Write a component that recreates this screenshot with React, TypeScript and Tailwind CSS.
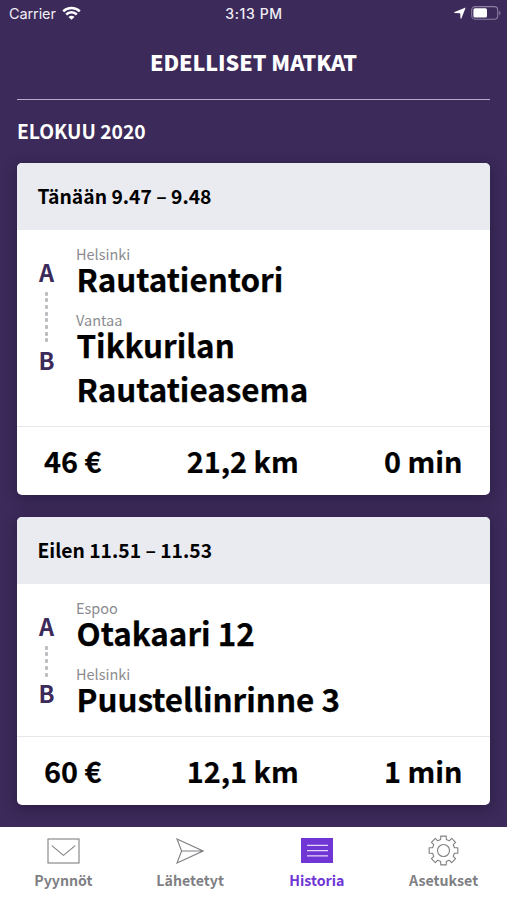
import type { ReactNode } from "react";

type Stop = { city: string; name: string };
type Trip = {
  time: string;
  from: Stop;
  to: Stop;
  dots: number;
  price: string;
  distance: string;
  duration: string;
};

const trips: Trip[] = [
  {
    time: "Tänään 9.47 – 9.48",
    from: { city: "Helsinki", name: "Rautatientori" },
    to: { city: "Vantaa", name: "Tikkurilan Rautatieasema" },
    dots: 8,
    price: "46 €",
    distance: "21,2 km",
    duration: "0 min",
  },
  {
    time: "Eilen 11.51 – 11.53",
    from: { city: "Espoo", name: "Otakaari 12" },
    to: { city: "Helsinki", name: "Puustellinrinne 3" },
    dots: 5,
    price: "60 €",
    distance: "12,1 km",
    duration: "1 min",
  },
];

function StatusBar() {
  return (
    <div className="grid h-[27px] grid-cols-3 items-center pl-[9px] pr-[6px] font-['Inter',sans-serif] text-[14.5px] leading-[27px] text-[#f1eef6]">
      <div className="flex items-center gap-[6px]">
        <span className="tracking-[-0.1px]">Carrier</span>
        <svg width="19" height="14" viewBox="0 0 19 14" fill="none" stroke="#fff" strokeWidth="2.5" className="-mt-[2px]">
          <path d="M1.2 5.3C5.8 .8 13.2 .8 17.8 5.3" />
          <path d="M4.2 8.5C7.2 5.6 11.8 5.6 14.8 8.5" />
          <path d="M9.5 13.8L6.5 10.9C8.2 9.3 10.8 9.3 12.5 10.9Z" fill="#fff" stroke="none" />
        </svg>
      </div>
      <div className="mr-[2px] text-center text-[14px] font-medium tracking-[0.6px]">3:13 PM</div>
      <div className="flex items-center justify-end gap-[5px]">
        <svg width="12" height="12" viewBox="0 0 12 12" fill="#fff" className="-mt-px">
          <path d="M11.7 .4L7.4 11.4C7.2 12 6.5 11.9 6.5 11.3L6.2 6.2L.8 5.9C.1 5.9 0 5.2 .6 4.9Z" />
        </svg>
        <svg width="30" height="14" viewBox="0 0 30 14" className="-mt-px">
          <rect x=".7" y=".6" width="26" height="12.6" rx="3.4" fill="none" stroke="#8a7f9e" strokeWidth="1.1" />
          <rect x="2.4" y="2.2" width="13.6" height="9.4" rx="1.6" fill="#fff" />
          <path d="M28.2 4.7C30 5.6 30 8.4 28.2 9.2Z" fill="#8a7f9e" />
        </svg>
      </div>
    </div>
  );
}

function StopText({ stop }: { stop: Stop }) {
  return (
    <div>
      <div className="text-[14.5px] leading-[14px] text-[#8b8b90]">{stop.city}</div>
      <div className="-mt-1 w-[270px] pl-[0.5px] text-[31.4px] font-bold leading-[44px] text-black [-webkit-text-stroke:0.25px_black]">
        {stop.name}
      </div>
    </div>
  );
}

function TripCard({ trip }: { trip: Trip }) {
  return (
    <section className="overflow-hidden rounded-[5px] bg-white shadow-[0_3px_14px_rgba(20,12,40,0.45)]">
      <header className="h-[67px] bg-[#eaebf1] pl-[20.5px] text-[19.3px] font-bold leading-[67px] text-black">
        {trip.time}
      </header>
      <div className="flex pb-[15px] pt-[17px]">
        <div className="ml-[19px] mt-[12.5px] flex w-[21px] flex-col items-center self-stretch text-[23.5px] font-bold leading-[24px] text-[#3b2a5a]">
          <span>A</span>
          <div className={trip.dots === 8 ? "mb-[5px] mt-[8px] flex h-[51px] flex-col justify-between" : "mb-[4px] mt-[8px] flex h-[31px] flex-col justify-between"}>
            {Array.from({ length: trip.dots }, (_, i) => (
              <i key={i} className="h-[4px] w-[3px] rounded-[1px] bg-[#bdbdc1]" />
            ))}
          </div>
          <span>B</span>
        </div>
        <div className="ml-[19px] flex flex-col gap-[12px]">
          <StopText stop={trip.from} />
          <StopText stop={trip.to} />
        </div>
      </div>
      <footer className="flex h-[69px] justify-between border-t border-[#e8e8ec] pl-[27px] pr-[27.5px] text-[28.8px] font-bold leading-[68px] text-black [-webkit-text-stroke:0.2px_black]">
        <span>{trip.price}</span>
        <span>{trip.distance}</span>
        <span>{trip.duration}</span>
      </footer>
    </section>
  );
}

function gearPath() {
  const pts: string[] = [];
  for (let i = 0; i < 8; i++) {
    const mid = (i * Math.PI) / 4;
    const corners: [number, number][] = [
      [11.3, -0.25],
      [14.6, -0.19],
      [14.6, 0.19],
      [11.3, 0.25],
    ];
    for (const [r, a] of corners) {
      pts.push(`${(15.5 + r * Math.sin(mid + a)).toFixed(2)} ${(15.5 - r * Math.cos(mid + a)).toFixed(2)}`);
    }
  }
  return `M${pts.join("L")}Z`;
}

function Tab({ label, active, children }: { label: string; active?: boolean; children: ReactNode }) {
  return (
    <div className={active ? "flex flex-1 flex-col items-center text-[#6f35d5]" : "flex flex-1 flex-col items-center text-[#808084]"}>
      <div className="flex h-[31px] items-center justify-center">{children}</div>
      <span className="mt-[4px] text-[14.2px] font-bold leading-[20px]">{label}</span>
    </div>
  );
}

function TabBar() {
  return (
    <nav className="flex h-[73px] bg-white pt-[8px]">
      <Tab label="Pyynnöt">
        <svg width="33" height="26" viewBox="0 0 33 26" fill="none" stroke="currentColor" strokeWidth="1.1">
          <rect x="1" y="1" width="31" height="24" />
          <path d="M4.8 7.6L16.5 17.4L28.2 7.6" />
        </svg>
      </Tab>
      <Tab label="Lähetetyt">
        <svg width="28" height="26" viewBox="0 0 28 26" fill="none" stroke="currentColor" strokeWidth="1.1">
          <path d="M1 1L27 13L1 25L5.6 13ZM5.6 13H27" />
        </svg>
      </Tab>
      <Tab label="Historia" active>
        <svg width="32" height="25" viewBox="0 0 32 25">
          <rect width="32" height="25" fill="#6f35d5" />
          <path d="M6 7.3H27M6 12.6H27M6 17.9H27" stroke="#e4d8f8" strokeWidth="1.2" />
        </svg>
      </Tab>
      <Tab label="Asetukset">
        <svg width="31" height="31" viewBox="0 0 31 31" fill="none" stroke="currentColor" strokeWidth="1.1">
          <path d={gearPath()} strokeLinejoin="round" />
          <circle cx="15.5" cy="15.5" r="6" />
        </svg>
      </Tab>
    </nav>
  );
}

export default function App() {
  return (
    <div className="flex h-[900px] w-[507px] flex-col overflow-hidden bg-[#3c2a5a] font-['Noto_Sans_CJK_JP','Noto_Sans',sans-serif]">
      <StatusBar />
      <main className="flex flex-1 flex-col px-[17px]">
        <h1 className="h-[73px] border-b border-[#b5adc2] text-center text-[21.5px] font-black leading-[70px] tracking-[-0.05px] text-white">
          EDELLISET MATKAT
        </h1>
        <h2 className="h-[63px] text-[19.3px] font-bold leading-[63px] text-white">ELOKUU 2020</h2>
        <div className="flex flex-col gap-[22px]">
          {trips.map((t) => (
            <TripCard key={t.time} trip={t} />
          ))}
        </div>
      </main>
      <TabBar />
    </div>
  );
}
